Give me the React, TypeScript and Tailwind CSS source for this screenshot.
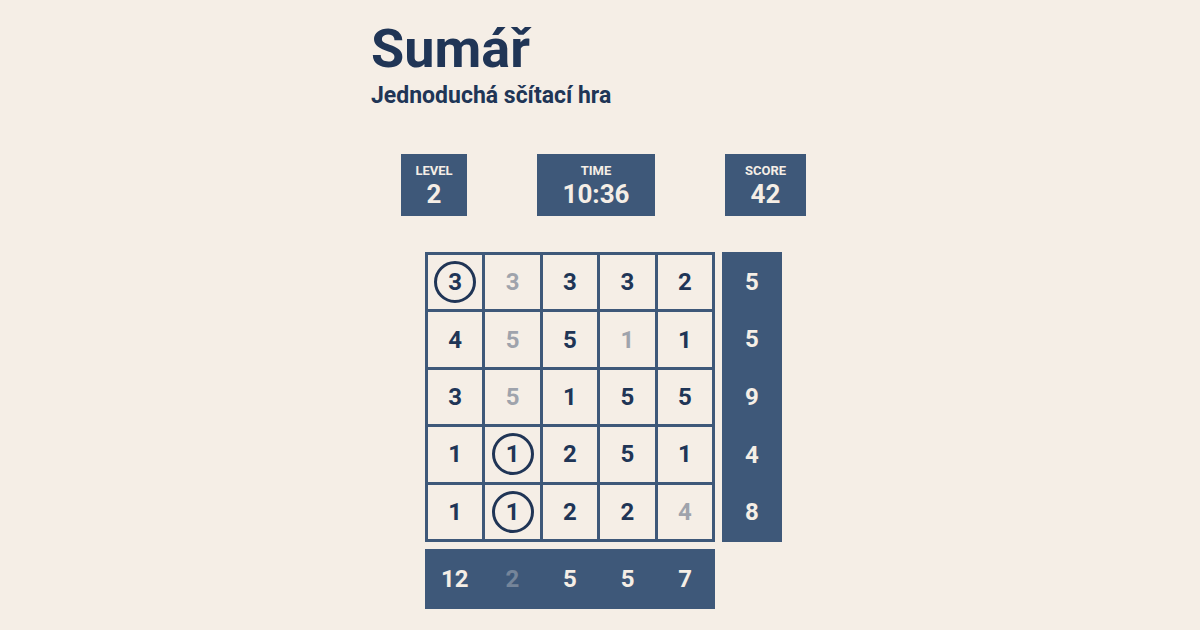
type CellState = 'open' | 'circled' | 'crossed';
type Cell = { value: number; state: CellState };

const open = (value: number): Cell => ({ value, state: 'open' });
const circled = (value: number): Cell => ({ value, state: 'circled' });
const crossed = (value: number): Cell => ({ value, state: 'crossed' });

const board: Cell[][] = [
  [circled(3), crossed(3), open(3), open(3), open(2)],
  [open(4), crossed(5), open(5), crossed(1), open(1)],
  [open(3), crossed(5), open(1), open(5), open(5)],
  [open(1), circled(1), open(2), open(5), open(1)],
  [open(1), circled(1), open(2), open(2), crossed(4)],
];

const rowSums = [5, 5, 9, 4, 8];
const columnSums = [
  { value: 12, done: false },
  { value: 2, done: true },
  { value: 5, done: false },
  { value: 5, done: false },
  { value: 7, done: false },
];

const markStyles: Record<CellState, string> = {
  open: 'border-transparent',
  circled: 'border-[#203556]',
  crossed: 'border-transparent opacity-40',
};

function Stat({ label, value, className }: { label: string; value: string; className: string }) {
  return (
    <div className={`flex flex-col items-center bg-[#3e5879] pt-2 pb-2 text-[#f5eee6] ${className}`}>
      <dt className="text-[13px] leading-[18px] font-bold">{label}</dt>
      <dd className="text-[26px] leading-[28px] font-bold">{value}</dd>
    </div>
  );
}

function BoardCell({ cell }: { cell: Cell }) {
  return (
    <button type="button" className="flex items-center justify-center bg-[#f5eee6]">
      <span
        className={`flex size-[42px] items-center justify-center rounded-full border-3 ${markStyles[cell.state]}`}
      >
        {cell.value}
      </span>
    </button>
  );
}

export default function App() {
  return (
    <div className="min-h-screen bg-[#f5eee6] pt-5 pb-5 pl-[7px] font-['Roboto',sans-serif] text-[#203556]">
      <main className="mx-auto max-w-[465px]">
        <header>
          <h1 className="text-[54px] leading-[58px] font-bold">Sumář</h1>
          <p className="mt-0.5 text-[23px] leading-[32px] font-bold">Jednoduchá sčítací hra</p>
        </header>

        <dl className="mt-[42px] flex justify-between px-[30px]">
          <Stat label="LEVEL" value="2" className="w-[66px]" />
          <Stat label="TIME" value="10:36" className="w-[118px]" />
          <Stat label="SCORE" value="42" className="w-[81px]" />
        </dl>

        <section className="mx-auto mt-9 grid w-fit grid-cols-[290px_60px] grid-rows-[290px_60px] gap-[7px] text-2xl font-bold">
          <div className="grid grid-cols-5 grid-rows-5 gap-[3px] bg-[#3e5879] p-[3px]">
            {board.flatMap((row, r) => row.map((cell, c) => <BoardCell key={`${r}-${c}`} cell={cell} />))}
          </div>
          <ul className="grid grid-rows-5 bg-[#3e5879] py-px text-[#f5eee6]">
            {rowSums.map((sum, i) => (
              <li key={i} className="flex items-center justify-center">
                {sum}
              </li>
            ))}
          </ul>
          <ul className="grid grid-cols-5 bg-[#3e5879] px-px text-[#f5eee6]">
            {columnSums.map((sum, i) => (
              <li key={i} className={`flex items-center justify-center ${sum.done ? 'opacity-30' : ''}`}>
                {sum.value}
              </li>
            ))}
          </ul>
        </section>
      </main>
    </div>
  );
}
